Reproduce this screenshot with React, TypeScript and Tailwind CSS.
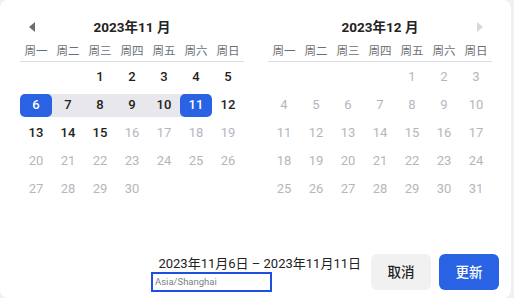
const font = { fontFamily: 'Roboto, "Noto Sans CJK SC", sans-serif' }

const weekdays = ['周一', '周二', '周三', '周四', '周五', '周六', '周日']

type Cell = { d?: number; tone?: 'dark' | 'muted'; sel?: 'start' | 'end'; range?: boolean }

const novRows: Cell[][] = [
  [{}, {}, { d: 1, tone: 'dark' }, { d: 2, tone: 'dark' }, { d: 3, tone: 'dark' }, { d: 4, tone: 'dark' }, { d: 5, tone: 'dark' }],
  [
    { d: 6, sel: 'start' },
    { d: 7, tone: 'dark', range: true },
    { d: 8, tone: 'dark', range: true },
    { d: 9, tone: 'dark', range: true },
    { d: 10, tone: 'dark', range: true },
    { d: 11, sel: 'end' },
    { d: 12, tone: 'dark' },
  ],
  [13, 14, 15].map((d) => ({ d, tone: 'dark' as const })).concat([16, 17, 18, 19].map((d) => ({ d, tone: 'muted' as const }))),
  [20, 21, 22, 23, 24, 25, 26].map((d) => ({ d, tone: 'muted' as const })),
  [27, 28, 29, 30].map((d) => ({ d, tone: 'muted' as const } as Cell)).concat([{}, {}, {}]),
]

const decRows: Cell[][] = [
  [{}, {}, {}, {}, { d: 1, tone: 'muted' }, { d: 2, tone: 'muted' }, { d: 3, tone: 'muted' }],
  [4, 5, 6, 7, 8, 9, 10].map((d) => ({ d, tone: 'muted' as const })),
  [11, 12, 13, 14, 15, 16, 17].map((d) => ({ d, tone: 'muted' as const })),
  [18, 19, 20, 21, 22, 23, 24].map((d) => ({ d, tone: 'muted' as const })),
  [25, 26, 27, 28, 29, 30, 31].map((d) => ({ d, tone: 'muted' as const })),
]

const DayCell = ({ c }: { c: Cell }) => {
  const bar = c.range ? 'bg-[#e8e8ec]' : c.sel === 'start' ? 'bg-[linear-gradient(to_right,transparent_50%,#e8e8ec_50%)]' : c.sel === 'end' ? 'bg-[linear-gradient(to_right,#e8e8ec_50%,transparent_50%)]' : ''
  return (
    <div className="flex h-[28px] items-center">
      <div className={`h-[23px] w-full ${bar}`}>
        {c.sel ? (
          <div className="flex h-full w-full items-center justify-center rounded-[5px] bg-[#2962e3] text-[13px] font-medium text-white">{c.d}</div>
        ) : (
          <div className={`flex h-full w-full items-center justify-center text-[13px] ${c.tone === 'dark' ? 'font-medium text-[#222]' : 'text-[#b4b6bc]'}`}>{c.d}</div>
        )}
      </div>
    </div>
  )
}

const Month = ({ title, rows, left, right }: { title: string; rows: Cell[][]; left?: boolean; right?: boolean }) => (
  <div className="w-[224px]">
    <div className="relative flex h-[22px] items-center justify-center">
      {left && (
        <svg className="absolute left-[9px] top-[6px]" width="6" height="10" viewBox="0 0 6 10">
          <path d="M6 0 L0 5 L6 10 Z" fill="#6b6e75" />
        </svg>
      )}
      <span className="text-[13.5px] font-bold text-[#222]">{title}</span>
      {right && (
        <svg className="absolute right-[9px] top-[6px]" width="6" height="10" viewBox="0 0 6 10">
          <path d="M0 0 L6 5 L0 10 Z" fill="#d6d8dc" />
        </svg>
      )}
    </div>
    <div className="mt-[4px] grid h-[20px] grid-cols-7 items-center border-b border-[#dcdde0]">
      {weekdays.map((w) => (
        <span key={w} className="text-center text-[11.5px] text-[#6b6e75]">{w}</span>
      ))}
    </div>
    <div className="mt-[1px]">
      {rows.map((r, i) => (
        <div key={i} className="grid grid-cols-7">
          {r.map((c, j) => (
            <DayCell key={j} c={c} />
          ))}
        </div>
      ))}
    </div>
  </div>
)

export default function App() {
  return (
    <div className="flex h-[298px] w-[514px] bg-[#f0f0f2]" style={font}>
      <div className="flex h-[298px] w-[511px] flex-col rounded-lg bg-white">
        <div className="flex gap-[24px] pl-[20px] pt-[16px]">
          <Month title="2023年11 月" rows={novRows} left />
          <Month title="2023年12 月" rows={decRows} right />
        </div>
        <div className="mt-auto flex items-end justify-end gap-[8px] pb-[8px] pr-[12px]">
          <div className="mb-[-2px] mr-[2px] flex flex-col items-end">
            <span className="text-[13px] leading-[16px] text-[#222]">2023年11月6日 – 2023年11月11日</span>
            <div className="mr-[89px] h-[20px] w-[121px] border-2 border-[#1f4fe0] px-[2px] text-[9.5px] leading-[16px] text-[#7c7f86]">Asia/Shanghai</div>
          </div>
          <button className="flex h-[36px] w-[60px] items-center justify-center rounded-md bg-[#f1f1f1] text-[13.5px] font-medium text-[#222]">取消</button>
          <button className="flex h-[36px] w-[60px] items-center justify-center rounded-md bg-[#2962e3] text-[13.5px] font-medium text-white">更新</button>
        </div>
      </div>
    </div>
  )
}
